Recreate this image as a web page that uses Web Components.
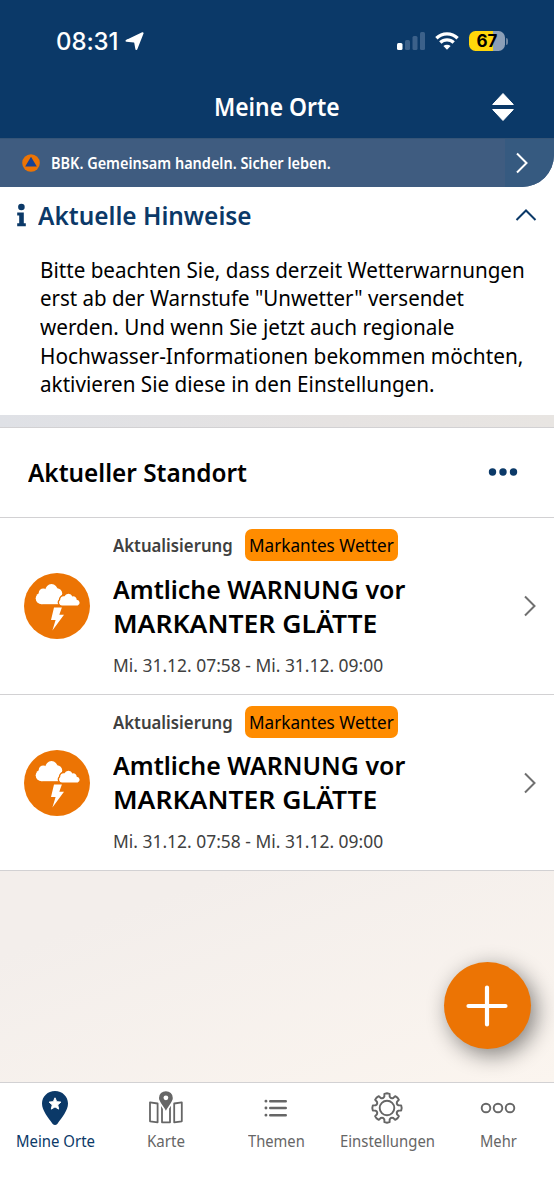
<!DOCTYPE html>
<html lang="de">
<head>
<meta charset="utf-8">
<meta name="viewport" content="width=device-width, initial-scale=1">
<title>Meine Orte</title>
<style>
html, body {
    margin: 0;
    height: 100%;
    overflow: hidden;
}

body {
    font-family: "Noto Sans", "Open Sans", sans-serif;
    color: #000;
    --navy: #0b3968;
    --orange: #ec7404;
    --line: #d2d1d3;
}
</style>
</head>
<body>

<warn-app>
    <status-bar slot="top" time="08:31" battery="67"></status-bar>
    <app-header slot="top"><fit-text width="126">Meine Orte</fit-text></app-header>
    <bbk-banner slot="top"><fit-text width="280">BBK. Gemeinsam handeln. Sicher leben.</fit-text></bbk-banner>

    <hint-panel>
        <fit-text slot="title" width="214">Aktuelle Hinweise</fit-text>
        <fit-text width="485">Bitte beachten Sie, dass derzeit Wetterwarnungen</fit-text>
        <fit-text width="424">erst ab der Warnstufe "Unwetter" versendet</fit-text>
        <fit-text width="414">werden. Und wenn Sie jetzt auch regionale</fit-text>
        <fit-text width="483">Hochwasser-Informationen bekommen möchten,</fit-text>
        <fit-text width="395">aktivieren Sie diese in den Einstellungen.</fit-text>
    </hint-panel>

    <place-header><fit-text width="219">Aktueller Standort</fit-text></place-header>

    <warning-row>
        <fit-text slot="kind" width="120">Aktualisierung</fit-text>
        <fit-text slot="badge" width="145">Markantes Wetter</fit-text>
        <fit-text slot="title" width="292">Amtliche WARNUNG vor</fit-text>
        <fit-text slot="title" width="264">MARKANTER GLÄTTE</fit-text>
        <fit-text slot="date" width="270">Mi. 31.12. 07:58 - Mi. 31.12. 09:00</fit-text>
    </warning-row>
    <warning-row class="last">
        <fit-text slot="kind" width="120">Aktualisierung</fit-text>
        <fit-text slot="badge" width="145">Markantes Wetter</fit-text>
        <fit-text slot="title" width="292">Amtliche WARNUNG vor</fit-text>
        <fit-text slot="title" width="264">MARKANTER GLÄTTE</fit-text>
        <fit-text slot="date" width="270">Mi. 31.12. 07:58 - Mi. 31.12. 09:00</fit-text>
    </warning-row>

    <add-button slot="fab"></add-button>

    <tab-bar slot="bottom">
        <tab-item icon="pin" active><fit-text width="79">Meine Orte</fit-text></tab-item>
        <tab-item icon="map"><fit-text width="38">Karte</fit-text></tab-item>
        <tab-item icon="list"><fit-text width="57">Themen</fit-text></tab-item>
        <tab-item icon="gear"><fit-text width="95">Einstellungen</fit-text></tab-item>
        <tab-item icon="more"><fit-text width="37">Mehr</fit-text></tab-item>
    </tab-bar>
</warn-app>

<script>
// attaches an open shadow root with the given markup
function render(el, html) {
    const template = document.createElement("template");
    template.innerHTML = html;
    const shadow = el.attachShadow({ mode: "open" });
    shadow.appendChild(template.content.cloneNode(true));
    return shadow;
}

const icons = {
    pin: `<svg width="28" height="36" viewBox="0 0 28 36"><path fill="currentColor" d="M14 1C6.700 1 1 6.500 1 13.500c0 7.200 6.200 13.800 10.500 20.300q2.500 2.500 5 0C20.800 27.300 27 20.700 27 13.500 27 6.500 21.300 1 14 1z"/><path fill="#fff" stroke="#fff" stroke-width="1" stroke-linejoin="round" d="M14 7.800l1.700 3.900 4.200.4-3.200 2.800 1 4.200-3.700-2.200-3.700 2.200 1-4.200-3.200-2.800 4.200-.4z"/></svg>`,
    map: `<svg width="36" height="36" viewBox="0 0 36 36"><g fill="none" stroke="currentColor" stroke-width="1.800" stroke-linejoin="round"><path d="M2 12.300l7.600 1.200v18.800L2 31.300zM14 12v20.300h8V12M14 32.300h8M26.200 13.500l7.600-1.200v19l-7.600 1z"/></g><path fill="currentColor" stroke="#fff" stroke-width="1.600" d="M17.900.4c-4.300 0-7.700 3.200-7.700 7.500 0 5 5.300 8.400 7.700 14.600 2.400-6.200 7.700-9.600 7.700-14.600 0-4.300-3.400-7.500-7.700-7.500z"/><circle cx="17.900" cy="7.800" r="2.400" fill="#fff"/></svg>`,
    list: `<svg width="24" height="36" viewBox="0 0 24 36"><g stroke="currentColor" stroke-width="2.400" stroke-linecap="round"><path d="M6.200 11.200h15.600M6.200 18h15.600M6.200 25.200h15.600"/><path d="M1.900 11.200h.1M1.900 18h.1M1.900 25.200h.1" stroke-width="2.800"/></g></svg>`,
    gear: `<svg width="34" height="36" viewBox="-17 -18 34 36"><g fill="none" stroke="currentColor" stroke-width="1.900" stroke-linejoin="round"><circle r="7.300"/><path id="teeth"/></g></svg>`,
    more: `<svg width="36" height="36" viewBox="0 0 36 36"><g fill="none" stroke="currentColor" stroke-width="1.900"><circle cx="6" cy="18" r="4.300"/><circle cx="18" cy="18" r="4.300"/><circle cx="30" cy="18" r="4.300"/></g></svg>`
};

// outline of a gear with eight rounded teeth
function gearPath() {
    const point = (a, r) => {
        const t = a * Math.PI / 180;
        return `${(Math.sin(t) * r).toFixed(2)} ${(-Math.cos(t) * r).toFixed(2)}`;
    };
    let d = `M${point(-13, 11.8)}`;
    for (let i = 0; i < 8; i++) {
        const a = i * 45;
        d += `L${point(a - 10.5, 14.4)}L${point(a, 14.7)}L${point(a + 10.5, 14.4)}L${point(a + 13, 11.8)}`;
        d += `Q${point(a + 22.5, 9.8)} ${point(a + 32, 11.8)}`;
    }
    return d + "Z";
}

// one line of text, condensed to the width it is given
class FitText extends HTMLElement {
    constructor() {
        super();
        render(this, `
            <style>
                :host { display: block; flex: none; white-space: nowrap; }
                span { display: inline-block; transform-origin: 0 50%; }
            </style>
            <span><slot></slot></span>
        `);
    }

    connectedCallback() {
        const width = Number(this.getAttribute("width"));
        const span = this.shadowRoot.querySelector("span");
        this.style.width = width + "px";
        span.style.transform = `scaleX(${width / span.offsetWidth})`;
    }
}

class WarnApp extends HTMLElement {
    constructor() {
        super();
        render(this, `
            <style>
                :host {
                    display: flex;
                    flex-direction: column;
                    position: relative;
                    width: 554px;
                    height: 1200px;
                    background: #f7f2ee;
                }
                .top { background: var(--navy); }
                main {
                    flex: 1;
                    background: linear-gradient(160deg, #f3eeeb, #f3eeeb 70%, #fbf5ef);
                }
                .fab { position: absolute; right: 23px; bottom: 151px; }
            </style>
            <div class="top"><slot name="top"></slot></div>
            <main><slot></slot></main>
            <slot name="bottom"></slot>
            <div class="fab"><slot name="fab"></slot></div>
        `);
    }
}

class StatusBar extends HTMLElement {
    constructor() {
        super();
        render(this, `
            <style>
                :host {
                    display: flex;
                    align-items: center;
                    height: 82px;
                    padding: 0 46px 0 56px;
                    box-sizing: border-box;
                    background: var(--navy);
                    color: #fff;
                    font: 500 24px/30px Inter, sans-serif;
                }
                .time { width: 64px; padding-top: 1px; letter-spacing: -0.1px; white-space: nowrap; }
                .arrow { margin: 0 auto 0 5px; }
                .wifi { margin: 0 10px 0 10px; }
                .battery {
                    width: 36px;
                    height: 20px;
                    border-radius: 6.500px;
                    background: linear-gradient(90deg, #ffd60a 67%, #8c9fb7 67%);
                    color: #000;
                    font-size: 17px;
                    font-weight: 700;
                    line-height: 20px;
                    text-align: center;
                }
                .cap { width: 2px; height: 7px; margin-left: 1px; border-radius: 0 2px 2px 0; background: #6b84a1; }
            </style>
            <span class="time"></span>
            <svg class="arrow" width="20" height="20" viewBox="0 0 20 20"><path fill="#fff" stroke="#fff" stroke-width="2" stroke-linejoin="round" d="M17.600 2.200L11.400 18 10.200 11.600Q10 10.500 9 10.400L1.500 9.800z"/></svg>
            <svg width="28" height="20" viewBox="0 0 28 20">
                <rect x="0" y="12" width="5.500" height="7" rx="1.500" fill="#fff"/>
                <g fill="#3c618a"><rect x="8" y="9" width="5" height="10" rx="1.500"/><rect x="15.500" y="5" width="5" height="14" rx="1.500"/><rect x="23" y="1" width="5" height="18" rx="1.500"/></g>
            </svg>
            <svg class="wifi" width="24" height="20" viewBox="0 0 24 20">
                <g fill="none" stroke="#fff" stroke-width="3.300"><path d="M1.400 7.200a15.200 15.200 0 0 1 21.200 0M5.300 11.500a9.600 9.600 0 0 1 13.400 0"/></g>
                <path fill="#fff" d="M12 18.800l-3.600-3.700a5.200 5.200 0 0 1 7.200 0z"/>
            </svg>
            <span class="battery"></span><span class="cap"></span>
        `);
    }

    connectedCallback() {
        this.shadowRoot.querySelector(".time").textContent = this.getAttribute("time");
        this.shadowRoot.querySelector(".battery").textContent = this.getAttribute("battery");
    }
}

class AppHeader extends HTMLElement {
    constructor() {
        super();
        render(this, `
            <style>
                :host {
                    display: grid;
                    grid-template-columns: 1fr auto 1fr;
                    align-items: center;
                    height: 56px;
                    padding: 0 40px 7px;
                    box-sizing: border-box;
                    background: var(--navy);
                    color: #fff;
                    font-size: 24.500px;
                    font-weight: 650;
                    line-height: 34px;
                }
                .title { grid-column: 2; }
                svg { justify-self: end; }
            </style>
            <div class="title"><slot></slot></div>
            <svg width="22" height="30" viewBox="0 0 22 30"><path fill="#fff" stroke="#fff" stroke-linejoin="round" d="M11 1.500L21.300 12.500H.7zM11 28.500L21.300 17.500H.7z"/></svg>
        `);
    }
}

class BbkBanner extends HTMLElement {
    constructor() {
        super();
        render(this, `
            <style>
                :host { display: block; background: #fff; }
                .bar {
                    display: flex;
                    align-items: center;
                    height: 49px;
                    overflow: hidden;
                    box-sizing: border-box;
                    padding-left: 22px;
                    border-bottom-right-radius: 32px;
                    border-top: 1px solid #365577;
                    background: #3f5c80;
                    color: #fff;
                    font-size: 16px;
                    font-weight: 650;
                    line-height: 24px;
                }
                .logo { margin-right: 11px; }
                .next { display: flex; align-items: center; width: 49px; height: 49px; margin-left: auto; background: #365a80; }
                .next svg { margin-left: 10px; }
            </style>
            <div class="bar">
                <svg class="logo" width="18" height="18" viewBox="0 0 18 18"><circle cx="9" cy="9" r="8.800" fill="#ec7404"/><path fill="#164194" d="M9 2.800l5.800 9.800H3.200z"/></svg>
                <slot></slot>
                <span class="next"><svg width="14" height="22" viewBox="0 0 14 22"><path fill="none" stroke="#fff" stroke-width="2" d="M2 1.500L11.500 11 2 20.500"/></svg></span>
            </div>
        `);
    }
}

class HintPanel extends HTMLElement {
    constructor() {
        super();
        render(this, `
            <style>
                :host {
                    display: block;
                    height: 228px;
                    background: #fff;
                    border-bottom: 12px solid #e4e3e4;
                    border-image: linear-gradient(90deg, #dfe1e6, #e6e3e2 60%, #e8e5e2) 1;
                    border-width: 0 0 12px;
                }
                header {
                    display: flex;
                    align-items: center;
                    height: 56px;
                    padding: 0 17px;
                    color: var(--navy);
                    font-size: 26px;
                    font-weight: 650;
                    line-height: 36px;
                }
                .info { margin-right: 12px; }
                .up { margin-left: auto; }
                .text { padding: 12.600px 0 0 39.500px; font-size: 21.500px; line-height: 28.700px; }
            </style>
            <header>
                <svg class="info" width="9" height="24" viewBox="0 0 9 24"><circle cx="4.400" cy="4" r="3.300" fill="currentColor"/><path fill="currentColor" d="M.2 9.500h6.600v10.700h2V23.200H.2v-3h2v-7.700h-2z"/></svg>
                <slot name="title"></slot>
                <svg class="up" width="22" height="14" viewBox="0 0 22 14"><path fill="none" stroke="currentColor" stroke-width="2" d="M1.500 12L11 2.500l9.500 9.500"/></svg>
            </header>
            <div class="text"><slot></slot></div>
        `);
    }
}

class PlaceHeader extends HTMLElement {
    constructor() {
        super();
        render(this, `
            <style>
                :host {
                    display: flex;
                    align-items: center;
                    justify-content: space-between;
                    height: 91px;
                    padding: 0 36px 1px 28px;
                    box-sizing: border-box;
                    border-top: 1px solid var(--line);
                    border-bottom: 1px solid var(--line);
                    background: #fff;
                    font-size: 26px;
                    font-weight: 650;
                    line-height: 36px;
                }
            </style>
            <slot></slot>
            <svg width="30" height="8" viewBox="0 0 30 8"><g fill="#0b3968"><circle cx="4.500" cy="4" r="3.700"/><circle cx="15" cy="4" r="3.700"/><circle cx="25.500" cy="4" r="3.700"/></g></svg>
        `);
    }
}

class WarningRow extends HTMLElement {
    constructor() {
        super();
        render(this, `
            <style>
                :host {
                    display: flex;
                    height: 177px;
                    padding: 0 17px 0 24px;
                    box-sizing: border-box;
                    border-bottom: 1px solid var(--line);
                    background: #fff;
                }
                :host(.last) { height: 176px; }
                .icon { align-self: center; margin-right: 23px; }
                .next { align-self: center; margin-left: auto; }
                .meta { display: flex; align-items: center; gap: 12px; height: 32px; margin-top: 11px; font-size: 18px; }
                .kind { color: #404040; font-weight: 600; }
                .badge { padding: 0 4px; border-radius: 7px; background: #ff8c00; line-height: 32px; }
                .title { margin-top: 12px; font-size: 25.500px; font-weight: 650; line-height: 33.600px; }
                :host(.last) .title { margin-top: 11px; }
                .date { margin-top: 12px; color: #404040; font-size: 18px; line-height: 26px; }
            </style>
            <svg class="icon" width="66" height="66" viewBox="0 0 66 66">
                <circle cx="33" cy="33" r="33" fill="#ec7404"/>
                <g fill="#fff">
                    <circle cx="17.600" cy="25.300" r="5.900"/><circle cx="19.300" cy="20" r="4.600"/><circle cx="27.500" cy="17.300" r="6.200"/><circle cx="33" cy="20.500" r="5.200"/>
                    <path d="M17.600 18h17.500v13.200H17.600z"/>
                </g>
                <g fill="#fff" stroke="#ec7404" stroke-width="2.600" paint-order="stroke">
                    <path d="M38 32.500a3 3 0 0 1-1.800-5.400 3.400 3.400 0 0 1 4.300-3.800 4.300 4.300 0 0 1 7.900.2 3.300 3.300 0 0 1 4.300 3.200 3 3 0 0 1 1 5.800z"/>
                </g>
                <path fill="#fff" d="M30 34.500h7.900l-2.600 7.300H40L28.400 57.500l3.200-10.600H27z"/>
            </svg>
            <div>
                <div class="meta"><div class="kind"><slot name="kind"></slot></div><div class="badge"><slot name="badge"></slot></div></div>
                <div class="title"><slot name="title"></slot></div>
                <div class="date"><slot name="date"></slot></div>
            </div>
            <svg class="next" width="14" height="22" viewBox="0 0 14 22"><path fill="none" stroke="#707070" stroke-width="2" d="M2 1.500L11.500 11 2 20.500"/></svg>
        `);
    }
}

class AddButton extends HTMLElement {
    constructor() {
        super();
        render(this, `
            <style>
                :host {
                    display: flex;
                    align-items: center;
                    justify-content: center;
                    width: 87px;
                    height: 87px;
                    border-radius: 50%;
                    background: var(--orange);
                    box-shadow: 5px 6px 22px rgba(0, 0, 0, .48);
                }
            </style>
            <svg width="43" height="42" viewBox="0 0 43 42"><path stroke="#fff" stroke-width="4.200" stroke-linecap="round" d="M21 2.500v37M2.500 21h37"/></svg>
        `);
    }
}

class TabBar extends HTMLElement {
    constructor() {
        super();
        render(this, `
            <style>
                :host {
                    display: grid;
                    grid-template-columns: repeat(5, 1fr);
                    height: 118px;
                    box-sizing: border-box;
                    border-top: 1px solid var(--line);
                    background: #fff;
                }
            </style>
            <slot></slot>
        `);
    }
}

class TabItem extends HTMLElement {
    constructor() {
        super();
        render(this, `
            <style>
                :host {
                    display: flex;
                    flex-direction: column;
                    align-items: center;
                    padding: 7px 1px 0 0;
                    color: #666;
                    font-size: 15.500px;
                    line-height: 22px;
                }
                :host([active]) { padding-right: 0; color: var(--navy); }
                .icon { height: 36px; margin-bottom: 4px; }
                svg { display: block; }
            </style>
            <div class="icon"></div>
            <slot></slot>
        `);
    }

    connectedCallback() {
        const box = this.shadowRoot.querySelector(".icon");
        box.innerHTML = icons[this.getAttribute("icon")] || "";
        const teeth = box.querySelector("#teeth");
        if (teeth) teeth.setAttribute("d", gearPath());
    }
}

customElements.define("warn-app", WarnApp);
customElements.define("status-bar", StatusBar);
customElements.define("app-header", AppHeader);
customElements.define("bbk-banner", BbkBanner);
customElements.define("hint-panel", HintPanel);
customElements.define("place-header", PlaceHeader);
customElements.define("warning-row", WarningRow);
customElements.define("add-button", AddButton);
customElements.define("tab-bar", TabBar);
customElements.define("tab-item", TabItem);
// last, so that the text is measured in its final styles
customElements.define("fit-text", FitText);
</script>
</body>
</html>
